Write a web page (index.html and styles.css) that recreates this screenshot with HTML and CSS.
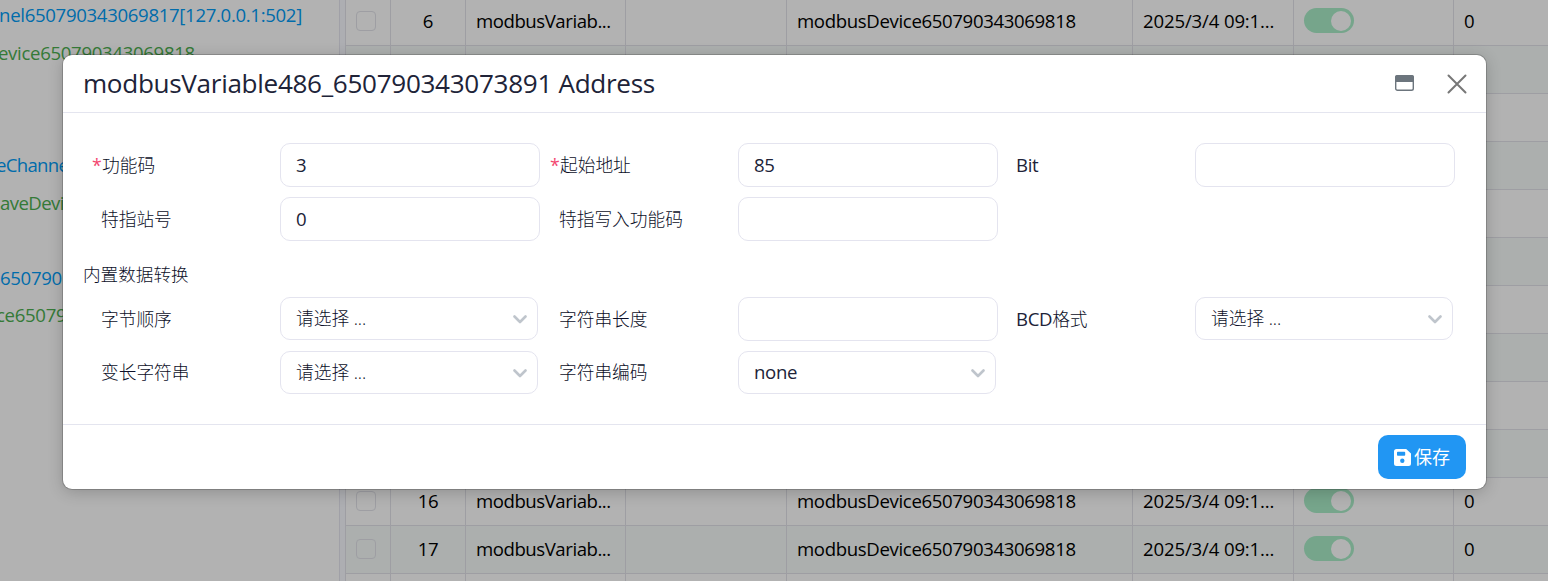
FILE: index.html
```html
<!DOCTYPE html>
<html lang="zh-CN">
<head>
<meta charset="utf-8">
<title>modbusVariable486_650790343073891 Address</title>
<link rel="stylesheet" href="styles.css">
</head>
<body>
<div class="page">
  <aside class="tree">
    <div class="node channel n1">nnel650790343069817[127.0.0.1:502]</div>
    <div class="node device n2">evice650790343069818</div>
    <div class="node channel n3">eChanne</div>
    <div class="node device n4">aveDevi</div>
    <div class="node channel n5">650790</div>
    <div class="node device n6">ce65079</div>
  </aside>
  <div class="splitter"></div>
  <main class="table" id="table">
    <div class="row"><div><i class="check"></i></div><div>6</div><div>modbusVariab...</div><div></div><div>modbusDevice650790343069818</div><div class="time">2025/3/4 09:1...</div><div><i class="switch"></i></div><div>0</div></div>
    <div class="row"><div></div><div></div><div></div><div></div><div></div><div></div><div></div><div></div></div>
    <div class="row"><div></div><div></div><div></div><div></div><div></div><div></div><div></div><div></div></div>
    <div class="row"><div></div><div></div><div></div><div></div><div></div><div></div><div></div><div></div></div>
    <div class="row"><div></div><div></div><div></div><div></div><div></div><div></div><div></div><div></div></div>
    <div class="row"><div></div><div></div><div></div><div></div><div></div><div></div><div></div><div></div></div>
    <div class="row"><div></div><div></div><div></div><div></div><div></div><div></div><div></div><div></div></div>
    <div class="row"><div></div><div></div><div></div><div></div><div></div><div></div><div></div><div></div></div>
    <div class="row"><div></div><div></div><div></div><div></div><div></div><div></div><div></div><div></div></div>
    <div class="row"><div></div><div></div><div></div><div></div><div></div><div></div><div></div><div></div></div>
    <div class="row"><div><i class="check"></i></div><div>16</div><div>modbusVariab...</div><div></div><div>modbusDevice650790343069818</div><div class="time">2025/3/4 09:1...</div><div><i class="switch"></i></div><div>0</div></div>
    <div class="row"><div><i class="check"></i></div><div>17</div><div>modbusVariab...</div><div></div><div>modbusDevice650790343069818</div><div class="time">2025/3/4 09:1...</div><div><i class="switch"></i></div><div>0</div></div>
    <div class="row"><div></div><div></div><div></div><div></div><div></div><div></div><div></div><div></div></div>
  </main>
</div>
<div class="backdrop">
  <section class="modal">
    <header class="head">
      <h1>modbusVariable486_650790343073891 Address</h1>
      <svg class="max" width="19" height="16" viewBox="0 0 19 16"><rect x=".7" y=".7" width="17.6" height="14.6" rx="1.8" fill="#fff" stroke="#6c757d" stroke-width="1.4"/><path d="M0 7V2.2Q0 0 2.2 0H16.8Q19 0 19 2.2V7Z" fill="#6c757d"/></svg>
      <svg class="close" width="20" height="20" viewBox="0 0 20 20"><path d="M1.5 1.5L18.5 18.5M18.5 1.5L1.5 18.5" stroke="#777" stroke-width="2" stroke-linecap="round"/></svg>
    </header>
    <div class="body">
      <div class="form">
        <div class="field required"><label><b>*</b>功能码</label><div class="input">3</div></div>
        <div class="field required"><label><b>*</b>起始地址</label><div class="input">85</div></div>
        <div class="field"><label class="latin">Bit</label><div class="input"></div></div>
        <div class="field"><label>特指站号</label><div class="input">0</div></div>
        <div class="field"><label>特指写入功能码</label><div class="input"></div></div>
      </div>
      <div class="legend">内置数据转换</div>
      <div class="form">
        <div class="field"><label>字节顺序</label><div class="select"><span>请选择 ...</span><svg width="14" height="9" viewBox="0 0 14 9"><path d="M1.5 1.5L7 7L12.5 1.5"/></svg></div></div>
        <div class="field"><label>字符串长度</label><div class="input"></div></div>
        <div class="field"><label><span class="bcd">BCD</span>格式</label><div class="select"><span>请选择 ...</span><svg width="14" height="9" viewBox="0 0 14 9"><path d="M1.5 1.5L7 7L12.5 1.5"/></svg></div></div>
        <div class="field last"><label>变长字符串</label><div class="select"><span>请选择 ...</span><svg width="14" height="9" viewBox="0 0 14 9"><path d="M1.5 1.5L7 7L12.5 1.5"/></svg></div></div>
        <div class="field last"><label>字符串编码</label><div class="select"><span class="latin">none</span><svg width="14" height="9" viewBox="0 0 14 9"><path d="M1.5 1.5L7 7L12.5 1.5"/></svg></div></div>
      </div>
    </div>
    <footer class="foot">
      <div class="save"><svg width="17" height="17" viewBox="0 0 17 17"><path fill="#fff" fill-rule="evenodd" d="M2.5 0H12.2L17 4.5V14.5Q17 17 14.5 17H2.5Q0 17 0 14.5V2.5Q0 0 2.5 0ZM3.8 2.8Q3 2.8 3 3.6V6Q3 6.8 3.8 6.8H10.4Q11.2 6.8 11.2 6V3.6Q11.2 2.8 10.4 2.8ZM8.3 9.5A2.2 2.2 0 1 0 8.3 13.9A2.2 2.2 0 1 0 8.3 9.5Z"/></svg><span>保存</span></div>
    </footer>
  </section>
</div>
</body>
</html>
```
FILE: styles.css
```css
* { box-sizing: border-box; }
html, body { margin: 0; height: 581px; overflow: hidden; background: #fff; }
body { font: 18.6px/24px "Open Sans", "Noto Sans CJK SC", sans-serif; letter-spacing: -0.35px; color: #000; }
.page { display: flex; height: 581px; overflow: hidden; }
.tree { flex: none; width: 339px; overflow: hidden; white-space: nowrap; display: flex; flex-direction: column; padding-top: 3px; }
.node { height: 24px; letter-spacing: -0.32px; }
.channel { color: #009bf5; }
.device { color: #4caf50; }
.n1 { margin-left: -12px; }
.n2 { margin: 14px 0 0 -2px; }
.n3 { margin: 88px 0 0 -4px; letter-spacing: -0.7px; }
.n4 { margin-top: 14px; letter-spacing: -0.6px; }
.n5 { margin-top: 51px; }
.n6 { margin: 13px 0 0 -4px; }
.splitter { flex: none; width: 6px; background: #f8f9ff; border-left: 1px solid #e6e6f0; }
.table { flex: none; width: 1203px; margin-top: -2px; border-left: 1px solid #e2e3ea; }
.row { display: grid; grid-template-columns: 45px 75px 160px 161px 346px 161px 160px 95px; height: 48px; border-bottom: 1px solid #e2e3ea; }
.row:nth-child(even) { background: #f6fbf9; }
.row > div { display: flex; align-items: center; padding: 0 0 2px 10px; border-right: 1px solid #e2e3ea; white-space: nowrap; }
.row > div:nth-child(2) { justify-content: center; padding-left: 0; }
.row > div:nth-child(3) { letter-spacing: -0.45px; }
.row > div:last-child { border-right: 0; }
.row > .time { letter-spacing: -0.15px; }
.check { width: 20px; height: 20px; border: 1px solid #e2e3ea; border-radius: 4px; }
.switch { width: 50px; height: 25px; border-radius: 13px; background: #a9edc8; display: flex; justify-content: flex-end; align-items: center; padding-right: 3px; }
.switch::after { content: ""; width: 20px; height: 20px; border-radius: 50%; background: #fff; }
.backdrop { position: absolute; inset: 0; background: rgba(0, 0, 0, .3); padding: 55px 62px 0 63px; }
.modal { height: 434px; background: #fff; border-radius: 9px; box-shadow: 0 0 0 1px rgba(0,0,0,.18), 0 3px 16px rgba(0,0,0,.2); color: #202338; }
.head { height: 58px; border-bottom: 1px solid #e4e5ef; display: flex; align-items: center; padding: 0 19px 0 20px; }
h1 { margin: 0 auto 2px 0; font-size: 26.1px; font-weight: 400; line-height: 36px; letter-spacing: -0.31px; white-space: nowrap; }
.max { margin: 0 33px 1px 0; }
.body { height: 311px; padding: 30px 31px 0 20px; }
.form { display: grid; grid-template-columns: 458px 457px 457px; row-gap: 10px; }
.field { display: grid; grid-template-columns: 197px 260px; align-items: start; }
label { padding-left: 18px; font-size: 17.7px; font-weight: 300; line-height: 44px; white-space: nowrap; letter-spacing: 0; color: #0c0f28; }
.required label { padding-left: 9px; }
.last label { line-height: 42px; }
label b { display: inline-block; width: 10px; color: #f34770; font-weight: 400; }
.latin, .bcd { font-size: 18.6px; font-weight: 400; letter-spacing: -0.35px; color: #202338; }
.input { height: 44px; border: 1px solid #e4e4ef; border-radius: 10px; padding: 0 15px; line-height: 42px; }
.select { height: 43px; margin-right: 2px; border: 1px solid #e4e4ef; border-radius: 10px; padding: 0 10px 1px 15px; display: flex; justify-content: space-between; align-items: center; font-size: 17.7px; letter-spacing: 0; }
.select span:not(.latin) { font-weight: 300; color: #0c0f28; }
.select svg { margin-top: 3px; }
.select path { fill: none; stroke: #bfc5cc; stroke-width: 2.6; stroke-linecap: round; stroke-linejoin: round; }
.legend { height: 56px; line-height: 66px; font-size: 17.6px; font-weight: 300; letter-spacing: 0; color: #0c0f28; }
.foot { height: 65px; border-top: 1px solid #e4e5ef; display: flex; justify-content: flex-end; padding: 10px 20px; }
.save { width: 88px; height: 44px; border-radius: 10px; background: #2196f3; color: #fff; display: flex; align-items: center; justify-content: center; gap: 3px; letter-spacing: 0; font-size: 18px; }
```
